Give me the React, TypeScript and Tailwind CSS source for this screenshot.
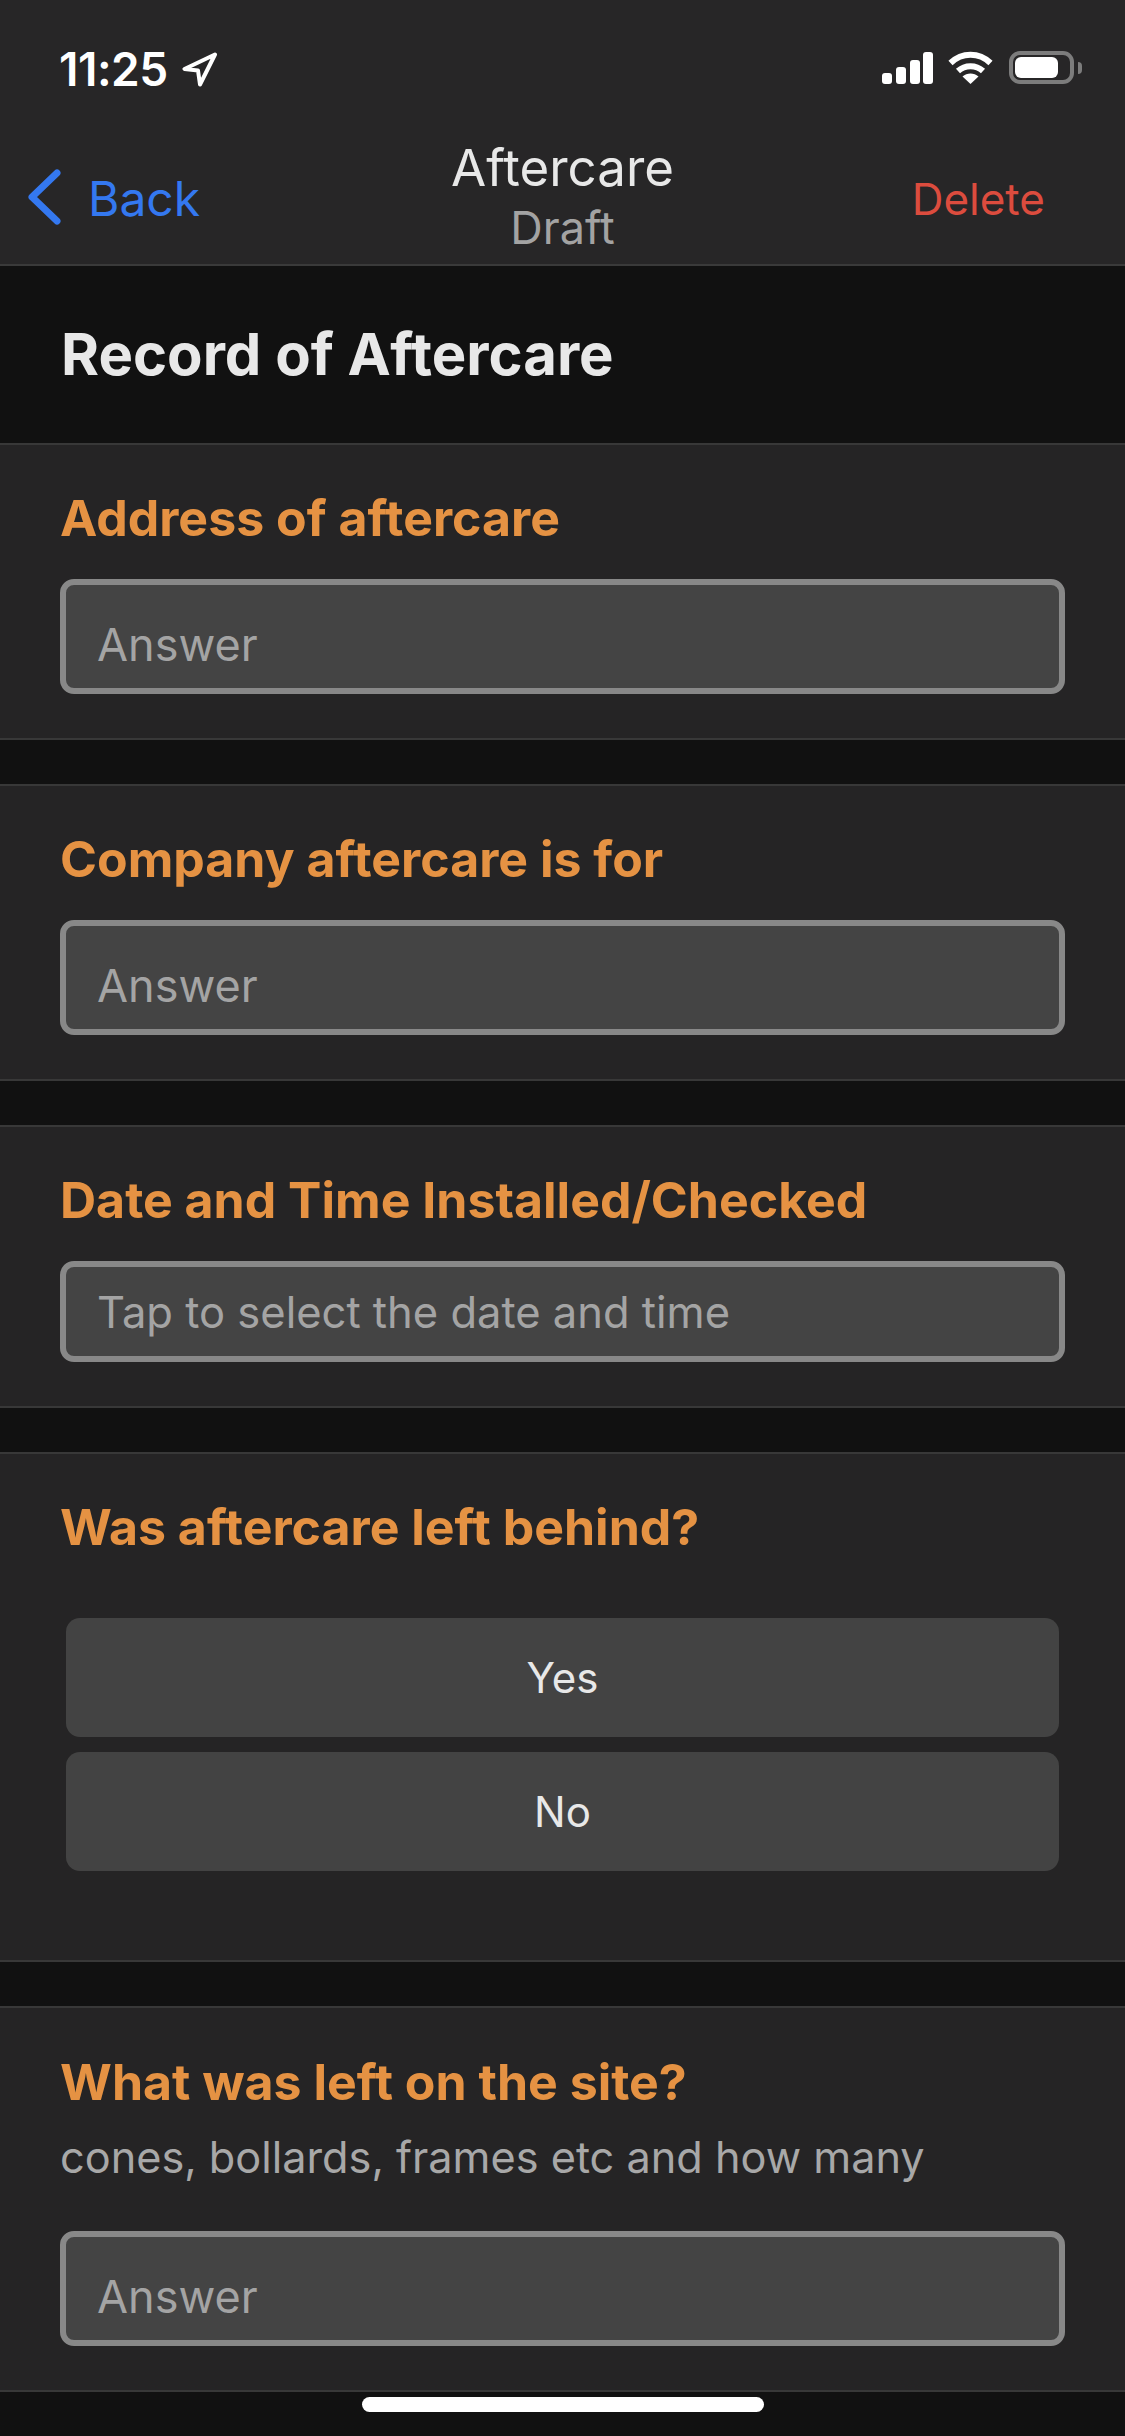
const font = "font-['Inter','Liberation_Sans',sans-serif]";

function StatusBar() {
  return (
    <div className="h-[132px] flex items-start justify-between pt-[44px] pl-[59px] pr-[43px]">
      <div className="flex items-center gap-[14px]">
        <span className="text-[46px] leading-[50px] font-semibold text-white tracking-[-0.5px]">11:25</span>
        <svg width="36" height="35" viewBox="0 0 36 35" fill="none">
          <path d="M33 2.5 L2.5 17 L16 18.5 L18 32.5 Z" stroke="#fff" strokeWidth="4" strokeLinejoin="round" />
        </svg>
      </div>
      <div className="flex items-center gap-[15px] pt-[7px]">
        <svg width="51" height="32" viewBox="0 0 51 32" fill="#fff">
          <rect x="0" y="21" width="10" height="11" rx="3" />
          <rect x="14" y="15" width="10" height="17" rx="3" />
          <rect x="28" y="8" width="10" height="24" rx="3" />
          <rect x="41" y="0" width="10" height="32" rx="3" />
        </svg>
        <svg width="45" height="33" viewBox="0 0 45 33" fill="none" stroke="#fff" strokeWidth="6">
          <path d="M2.5 12 C14 1 31 1 42.5 12" />
          <path d="M10 20 C17 13.5 28 13.5 35 20" />
          <path d="M22.5 33 L14.5 25.5 C19 21.5 26 21.5 30.5 25.5 Z" fill="#fff" stroke="none" />
        </svg>
        <div className="flex items-center ml-[1px]">
          <div className="w-[65px] h-[33px] rounded-[11px] border-[4px] border-[#7c7c7c] p-[2px] flex">
            <div className="w-[43px] h-full rounded-[6px] bg-white" />
          </div>
          <div className="w-[4px] h-[12px] rounded-r-full bg-[#7c7c7c] ml-[4px]" />
        </div>
      </div>
    </div>
  );
}

function NavBar() {
  return (
    <div className="h-[134px] grid grid-cols-[1fr_auto_1fr] border-b-2 border-[#3a3a3a] bg-[#272627]">
      <div className="flex items-start pl-[26px] pt-[36px] gap-[26px]">
        <svg width="36" height="58" viewBox="0 0 36 58" fill="none">
          <path d="M31 5 L6 29 L31 53" stroke="#3478f0" strokeWidth="7" strokeLinecap="round" strokeLinejoin="round" />
        </svg>
        <span className="text-[48px] leading-[62px] text-[#3478f0]">Back</span>
      </div>
      <div className="flex flex-col items-center pt-[5px]">
        <span className="text-[51px] leading-[62px] text-[#e8e8e8]">Aftercare</span>
        <span className="text-[45px] leading-[52px] mt-[3px] text-[#a3a3a3]">Draft</span>
      </div>
      <div className="flex justify-end pt-[39px] pr-[80px]">
        <span className="text-[44px] leading-[56px] text-[#dc4c3e]">Delete</span>
      </div>
    </div>
  );
}

function Label({ children }: { children: string }) {
  return <div className="text-[50px] leading-[60px] font-bold text-[#e59243]">{children}</div>;
}

function Answer({ text = "Answer", tall = true }: { text?: string; tall?: boolean }) {
  return (
    <div
      className={
        "flex items-center pl-[31px] rounded-[14px] border-[6px] border-[#888888] bg-[#444444] text-[#a4a4a4] " +
        (tall ? "h-[115px] pt-[16px] text-[45px]" : "h-[101px] pt-[2px] text-[43.5px]")
      }
    >
      {text}
    </div>
  );
}

function Card({ children, className }: { children: React.ReactNode; className: string }) {
  return <div className={"bg-[#252425] border-y-2 border-[#383838] px-[60px] " + className}>{children}</div>;
}

function Choice({ children }: { children: string }) {
  return (
    <div className="h-[119px] flex items-center justify-center rounded-[14px] bg-[#434343] text-[42px] text-[#e8e8e8]">
      {children}
    </div>
  );
}

export default function App() {
  return (
    <div className={"w-[1125px] h-[2436px] overflow-hidden relative bg-[#111111] " + font}>
      <div className="bg-[#272627]">
        <StatusBar />
      </div>
      <NavBar />
      <div className="h-[177px] flex items-center pl-[61px] pb-[1px] text-[58px] font-bold text-[#e8e8e8]">
        Record of Aftercare
      </div>

      <Card className="h-[297px] pt-[43px]">
        <Label>Address of aftercare</Label>
        <div className="mt-[31px]">
          <Answer />
        </div>
      </Card>

      <Card className="h-[297px] pt-[43px] mt-[44px]">
        <Label>Company aftercare is for</Label>
        <div className="mt-[31px]">
          <Answer />
        </div>
      </Card>

      <Card className="h-[283px] pt-[43px] mt-[44px]">
        <Label>Date and Time Installed/Checked</Label>
        <div className="mt-[31px]">
          <Answer text="Tap to select the date and time" tall={false} />
        </div>
      </Card>

      <Card className="h-[510px] pt-[43px] mt-[44px]">
        <Label>Was aftercare left behind?</Label>
        <div className="mt-[61px] mx-[6px] flex flex-col gap-[15px]">
          <Choice>Yes</Choice>
          <Choice>No</Choice>
        </div>
      </Card>

      <Card className="h-[386px] pt-[44px] mt-[44px]">
        <Label>What was left on the site?</Label>
        <div className="text-[43.25px] leading-[56px] mt-[17px] text-[#a8a8a8]">cones, bollards, frames etc and how many</div>
        <div className="mt-[46px]">
          <Answer />
        </div>
      </Card>

      <div className="absolute bottom-[24px] left-[362px] w-[402px] h-[15px] rounded-full bg-white" />
    </div>
  );
}
